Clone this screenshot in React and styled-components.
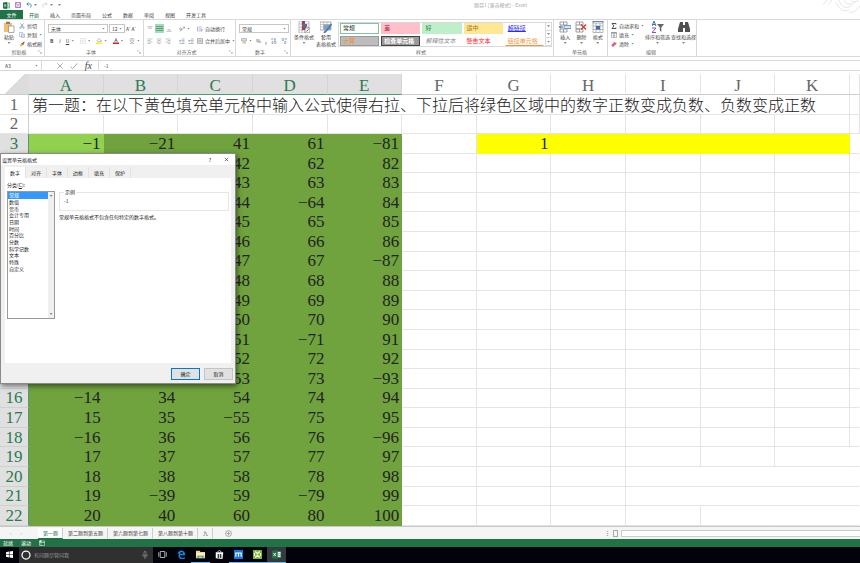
import React, { useState } from 'react';
import styled, { createGlobalStyle } from 'styled-components';

const COLORS = {
    excel: '#217346',
    line: '#d9d9d9',
    grid: '#e4e4e4',
    header: '#e0e0e0',
    cell: '#70a23e',
    active: '#92d050',
    yellow: '#ffff00',
    text: '#444'
};
const UI_FONT = '"Noto Sans CJK SC", "Noto Sans", sans-serif';
const CELL_FONT = '"Liberation Serif", "Noto Sans CJK SC", serif';

const GlobalStyle = createGlobalStyle`
    * {
        box-sizing: border-box;
    }
    body {
        margin: 0;
        background: #fff;
        color: ${COLORS.text};
        font-family: ${UI_FONT};
        font-size: 5px;
        line-height: 6px;
    }
    button, input, select {
        font: inherit;
        color: inherit;
        margin: 0;
        padding: 0;
        border: 0;
        background: none;
    }
`;

/* ---------- data ---------- */

const COLUMNS = ['A', 'B', 'C', 'D', 'E', 'F', 'G', 'H', 'I', 'J', 'K'];
const NEGATIVE = [1, 14, 16, 21, 39, 55, 64, 71, 79, 81, 87, 93, 96, 13];
const ROWS = Array.from({ length: 20 }, (_, i) => i + 3);
const valueAt = (row, col) => {
    const n = row - 2 + col * 20;
    return NEGATIVE.includes(n) ? `−${n}` : `${n}`;
};
const TITLE =
    '第一题：在以下黄色填充单元格中输入公式使得右拉、下拉后将绿色区域中的数字正数变成负数、负数变成正数';

const MENU = ['插入', '页面布局', '公式', '数据', '审阅', '视图', '开发工具'];
const STYLES = [
    { name: '常规', color: '#333', border: '#7fc4a0' },
    { name: '差', bg: '#ffc0ca', color: '#b0203a' },
    { name: '好', bg: '#bdf0c8', color: '#1e7a32' },
    { name: '适中', bg: '#ffe793', color: '#a8741a' },
    { name: '超链接', color: '#2a2af0', underline: true },
    { name: '计算', bg: '#bdbdbd', color: '#f08a1c', border: '#999' },
    { name: '检查单元格', bg: '#9a9a9a', color: '#fff', border: '#444', bold: true },
    { name: '解释性文本', color: '#888', italic: true },
    { name: '警告文本', color: '#ff2020' },
    { name: '链接单元格', color: '#f0953c', rule: true }
];
const CATEGORIES = [
    '常规', '数值', '货币', '会计专用', '日期', '时间',
    '百分比', '分数', '科学记数', '文本', '特殊', '自定义'
];
const DIALOG_TABS = ['数字', '对齐', '字体', '边框', '填充', '保护'];
const SHEETS = ['第一题', '第二题到第五题', '第六题到第七题', '第八题到第十题', '九'];

/* ---------- icons, all on a 12 x 12 box ---------- */

const ICONS = {
    excel: (
        <>
            <path d="M0 1l7-1v12l-7-1z" fill="#217346" />
            <path d="M7 2h5v8H7z" fill="#fff" stroke="#217346" />
            <path d="M2 4l3 4M5 4L2 8" stroke="#fff" strokeWidth="1.2" />
            <path d="M7 5h5M7 7.500h5" stroke="#217346" strokeWidth=".7" />
        </>
    ),
    save: (
        <>
            <path d="M1 1h10v10H1z" fill="none" stroke="#9a4fb0" strokeWidth="1.4" />
            <path d="M3 1h6v4H3zM3.500 7.500h5V11h-5z" fill="#fff" stroke="#9a4fb0" />
        </>
    ),
    undo: (
        <path d="M5 1L1.500 4 5 7M2 4h5c5 0 4 6 1 7" fill="none" stroke="#2f6fb5" strokeWidth="1.6" />
    ),
    redo: (
        <path d="M7 1l3.500 3L7 7M10 4H5C0 4 1 10 4 11" fill="none" stroke="#c8c8c8" strokeWidth="1.4" />
    ),
    paste: (
        <>
            <path d="M1 2h8v9H1z" fill="#f3bd6b" />
            <path d="M3 .8h4v2H3z" fill="#777" />
            <path d="M5.500 5H11v6.500H5.500z" fill="#fff" stroke="#888" strokeWidth=".7" />
        </>
    ),
    cut: (
        <>
            <path d="M3 1l5 7M9 1L4 8" stroke="#555" fill="none" />
            <circle cx="3" cy="9.500" r="1.500" fill="none" stroke="#3a78b8" />
            <circle cx="9" cy="9.500" r="1.500" fill="none" stroke="#3a78b8" />
        </>
    ),
    copy: (
        <>
            <path d="M1 1h6v8H1z" fill="#fff" stroke="#6f94bd" />
            <path d="M5 4h6v7H5z" fill="#fff" stroke="#6f94bd" />
            <path d="M6.500 6.500h3M6.500 8.500h3" stroke="#6f94bd" />
        </>
    ),
    brush: (
        <>
            <path d="M6 5l4-4 1.500 1.500L8 7z" fill="#555" />
            <path d="M5 4l4 4-4 3-4-1z" fill="#f0b860" />
            <path d="M5 4l4 4" stroke="#444" strokeWidth="1.500" />
        </>
    ),
    top: <path d="M1 1.500h10M3 4.500h6" stroke="#777" />,
    middle: <path d="M1 3.500h10M1 6h10M1 8.500h10" stroke="#4a8a63" />,
    bottom: <path d="M3 7.500h6M1 10.500h10" stroke="#777" />,
    left: <path d="M1 2h10M1 5h6M1 8h10M1 11h6" stroke="#888" />,
    center: <path d="M1 2h10M3 5h6M1 8h10M3 11h6" stroke="#888" />,
    right: <path d="M1 2h10M5 5h6M1 8h10M5 11h6" stroke="#888" />,
    orient: (
        <path d="M1 6c1-3 4-3 4 0s-3 3-4 0M2 11l9-9M8 2h3v3" fill="none" stroke="#666" />
    ),
    outdent: (
        <>
            <path d="M6 2h5M6 5h5M6 8h5M1 11h10" stroke="#777" />
            <path d="M5 5.500H1M3 3.500l-2 2 2 2" stroke="#2f6fb5" fill="none" />
        </>
    ),
    indent: (
        <>
            <path d="M6 2h5M6 5h5M6 8h5M1 11h10" stroke="#777" />
            <path d="M0 5.500h4.500M2.500 3.500l2 2-2 2" stroke="#2f6fb5" fill="none" />
        </>
    ),
    wrap: (
        <>
            <path d="M1 1v10M3 2h6M3 10h3" stroke="#777" />
            <path d="M3 6h7c2 0 1 4-2 4M9 8l-2 2 2 1.500" stroke="#5a5ac8" fill="none" />
        </>
    ),
    merge: (
        <>
            <path d="M1 1h10v10H1zM1 4h10M1 8h10" fill="none" stroke="#777" />
            <path d="M3 6h6" stroke="#3a78b8" />
        </>
    ),
    borders: <path d="M1 1h10v10H1zM6 1v10M1 6h10" fill="none" stroke="#aaa" strokeDasharray="1 1" />,
    bucket: (
        <>
            <path d="M2 5l4-4 4 4-4 3z" fill="#fff" stroke="#777" />
            <path d="M10 5l1 3" stroke="#3a78b8" />
            <path d="M0 9h12v3H0z" fill="#ffee00" />
        </>
    ),
    fontColor: (
        <>
            <path d="M3 8l3-7 3 7M4 5.500h4" fill="none" stroke="#555" strokeWidth="1.300" />
            <path d="M0 9h12v3H0z" fill="#e01b1b" />
        </>
    ),
    phonetic: <path d="M3 1h6M1 4h10M3 5c1 4 4 6 8 7M9 5c-1 4-4 6-8 7" fill="none" stroke="#777" />,
    currency: (
        <>
            <path d="M1 1h10v5H1z" fill="#cfe0ef" stroke="#6f94bd" />
            <path d="M3 8h6M4 10h6" stroke="#efae3c" strokeWidth="2" />
        </>
    ),
    moreDec: <path d="M5 2L1 2M3 0.500L1 2l2 1.500M7 1h2v4H7zM2 7h2v4H2zM7 7h3v4H7z" fill="none" stroke="#5e7fa8" />,
    lessDec: <path d="M7 2h4M9 .5L11 2 9 3.500M2 1h3v4H2zM7 7h3v4H7zM4 10v1" fill="none" stroke="#5e7fa8" />,
    conditional: (
        <>
            <path d="M1 0h10v12H1zM1 3h10M1 6h10M1 9h10M4 0v12" fill="#fff" stroke="#999" strokeWidth=".6" />
            <path d="M4 0h3v3H4zM4 6h4v3H4z" fill="#b03a4a" />
            <path d="M4 3h5v3H4z" fill="#4f6fa8" />
            <path d="M7 7h5v5H7z" fill="#fff" stroke="#666" strokeWidth=".7" />
            <path d="M8.500 10.500l2-2" stroke="#333" strokeWidth=".8" />
        </>
    ),
    tableFormat: (
        <>
            <path d="M0 1h11v8H0z" fill="#fff" stroke="#888" strokeWidth=".7" />
            <path d="M3.500 3.500H11V9H3.500z" fill="#7aa7d8" />
            <path d="M0 3.500h11M0 6h11M3.500 1v8M7 1v8" stroke="#999" strokeWidth=".5" />
            <path d="M11.500 3L7 9l-3 3" stroke="#4a78b0" strokeWidth="1.800" />
        </>
    ),
    insert: (
        <>
            <path d="M1 1h7v3H1zM1 8h7v3H1zM4.500 1v3M4.500 8v3" fill="none" stroke="#888" strokeWidth=".8" />
            <path d="M5 4.500h7v3H5z" fill="#d5e3f3" stroke="#5a87bd" strokeWidth=".8" />
            <path d="M0 6h4M2 4.500L.5 6 2 7.500" stroke="#3567a8" fill="none" />
        </>
    ),
    remove: (
        <>
            <path d="M1 1h7v3H1zM1 8h7v3H1zM4.500 1v3M4.500 8v3M1 4v4h4" fill="none" stroke="#888" strokeWidth=".8" />
            <path d="M6 3.500l5 5M11 3.500l-5 5" stroke="#d0402c" strokeWidth="1.500" />
        </>
    ),
    format: (
        <>
            <path d="M1 2h10v9.500H1zM4 2v9M8 2v9M1 5h10M1 8.500h10" fill="none" stroke="#999" strokeWidth=".7" />
            <path d="M4 5h4v3.500H4z" fill="#3a70b0" />
            <path d="M1 .5h10M1 0v2M11 0v2" stroke="#3a70b0" strokeWidth=".8" />
        </>
    ),
    sum: <path d="M10 3V1H2l4 5-4 5h8V9" fill="none" stroke="#333" strokeWidth="1.700" />,
    fill: (
        <>
            <path d="M1 1h10v10H1z" fill="#fff" stroke="#777" />
            <path d="M1 2h10" stroke="#777" strokeWidth="2" />
            <path d="M6 4v5M4 7l2 2 2-2" fill="none" stroke="#2f6fb5" strokeWidth="1.300" />
        </>
    ),
    eraser: <path d="M1 8l6-6 4 3-6 6H3z" fill="#e8637a" stroke="#c03a4a" strokeWidth=".6" />,
    sort: (
        <>
            <path d="M0 5l2-5 2 5M.8 3.500h2.500" fill="none" stroke="#3a70b0" />
            <path d="M0 7h4l-4 4.500h4" fill="none" stroke="#8a4fb0" />
            <path d="M5 3h7L9.300 6.500V11L7.800 9.500v-3z" fill="#666" />
        </>
    ),
    find: <path d="M2 1h3v3h2V1h3l2 7v3H7V7H5v4H0V8z" fill="#505050" />,
    launcher: <path d="M1 5V1h4M5 5l5 5M10 6v4H6" fill="none" stroke="#888" strokeWidth="1.300" />,
    cross: <path d="M2 2l8 8M10 2l-8 8" stroke="#999" strokeWidth="1.200" />,
    close: <path d="M2 2l8 8M10 2l-8 8" stroke="#333" strokeWidth="1.600" />,
    check: <path d="M1 7l3 3 7-8" fill="none" stroke="#999" strokeWidth="1.300" />,
    plus: (
        <>
            <circle cx="6" cy="6" r="5" fill="none" stroke="#777" />
            <path d="M6 3v6M3 6h6" stroke="#777" />
        </>
    ),
    macro: (
        <>
            <path d="M1 2h10v9H1zM1 5h10M4 5v6" fill="none" stroke="#fff" />
            <circle cx="3" cy="2.500" r="2" fill="#fff" />
        </>
    ),
    windows: <path d="M0 2l5-1v4.500H0zM6 .8L12 0v5.500H6zM0 6.500h5V11l-5-1zM6 6.500h6V12l-6-1z" fill="#fff" />,
    cortana: <circle cx="6" cy="6" r="4.800" fill="none" stroke="#fff" strokeWidth="1.500" />,
    mic: <path d="M4.500 1h3v6h-3zM2.500 5c0 5 7 5 7 0M6 9v3" fill="none" stroke="#999" />,
    taskView: <path d="M3 2h6v8H3zM1 3v6M11 3v6" fill="none" stroke="#ddd" />,
    edge: (
        <path d="M1 5C2-1 11-1 11 7H4c0 4 4 4 6.500 2.500v2C4 14 0 9 3 5c-1 0-1.500 0-2 1zM4.300 5H8c0-3-3.500-3-3.700 0z" fill="#1684e0" />
    ),
    folder: (
        <>
            <path d="M0 1h5l1 1.500h6V11H0z" fill="#f5d67b" />
            <path d="M0 4h12v3H0z" fill="#fdf0c0" />
            <path d="M2 11V7.500h8V11H8V9H4v2z" fill="#35a0dc" />
        </>
    ),
    store: (
        <>
            <path d="M1 3h10l-1 9-9-1z" fill="#fff" />
            <path d="M4 3c0-3 4-3 4 0" fill="none" stroke="#fff" />
            <path d="M3.500 5.500h2v2h-2zM6.500 5.500h2v2h-2zM3.500 8.300h2v2h-2zM6.500 8.300h2v2h-2z" fill="#000" />
        </>
    ),
    maxthon: (
        <>
            <path d="M0 0h12v12H0z" fill="#1778dd" />
            <path d="M2.500 9V4h7v5M6 4v5" fill="none" stroke="#fff" strokeWidth="1.500" />
        </>
    ),
    recorder: (
        <>
            <path d="M0 0h12v12H0z" fill="#76b82a" />
            <path d="M3 2l3 3 3-3M3 10l3-3 3 3M2 4v4M10 4v4" fill="none" stroke="#fff" strokeWidth="1.500" />
        </>
    )
};

const Icon = ({ name, size = 8 }) => (
    <svg width={size} height={size} viewBox="0 0 12 12" aria-hidden="true">
        {ICONS[name]}
    </svg>
);

const Caret = styled.i`
    flex: none;
    width: 3px;
    height: 2px;
    background: #888;
    clip-path: polygon(0 0, 100% 0, 50% 100%);
`;

/* ---------- window chrome ---------- */

const Root = styled.div`
    display: flex;
    flex-direction: column;
    height: 100vh;
    overflow: hidden;
`;

const TitleBar = styled.header`
    display: flex;
    align-items: center;
    flex: none;
    height: 10px;
    padding-left: 3px;
    position: relative;
`;

const QuickAccess = styled.div`
    display: flex;
    align-items: center;
    gap: 5px;
    width: 138px;
    button {
        display: flex;
        align-items: center;
        gap: 2px;
    }
`;

const WindowTitle = styled.div`
    flex: 1;
    text-align: center;
    color: #aaa;
`;

const Swirl = styled.svg`
    position: absolute;
    top: 0;
    right: 0;
`;

const MenuBar = styled.nav`
    display: flex;
    align-items: center;
    flex: none;
    gap: 11px;
    height: 9px;
`;

const MenuTab = styled.button`
    color: ${props => (props.$active ? COLORS.excel : COLORS.text)};
    white-space: nowrap;
`;

const FileTab = styled.button`
    width: 23px;
    height: 9px;
    margin-right: -5px;
    background: ${COLORS.excel};
    color: #fff;
`;

/* ---------- ribbon ---------- */

const RibbonBar = styled.section`
    display: flex;
    flex: none;
    height: 38px;
    border-top: 1px solid ${COLORS.line};
    border-bottom: 1px solid ${COLORS.line};
`;

const Group = styled.div`
    display: flex;
    flex-direction: column;
    flex: none;
    width: ${props => props.$width}px;
    border-right: 1px solid ${COLORS.line};
`;

const GroupBody = styled.div`
    display: flex;
    flex: 1;
    min-height: 0;
    gap: ${props => props.$gap || 0}px;
    padding: 1px 1px 0 3px;
`;

const GroupLabel = styled.div`
    display: flex;
    align-items: center;
    flex: none;
    height: 8px;
    padding-right: 2px;
    color: #666;
    span {
        flex: 1;
        text-align: center;
    }
`;

const BigButton = styled.button`
    display: flex;
    flex: ${props => (props.$grow ? 1 : 'none')};
    flex-direction: column;
    align-items: center;
    gap: 1px;
    white-space: nowrap;
    ${Caret} {
        margin-top: 1px;
    }
`;

const Stack = styled.div`
    display: flex;
    flex-direction: column;
    flex: ${props => (props.$grow ? 1 : 'none')};
`;

const ToolStack = styled(Stack)`
    gap: 3px;
    padding-top: 3px;
`;

const SmallButton = styled.button`
    display: flex;
    align-items: center;
    gap: 2px;
    height: 9px;
    white-space: nowrap;
    font-weight: ${props => (props.$bold ? 700 : 400)};
    font-style: ${props => (props.$italic ? 'italic' : 'normal')};
    text-decoration: ${props => (props.$underline ? 'underline' : 'none')};
    background: ${props => (props.$on ? '#a3dcb9' : 'none')};
`;

const ToolRow = styled.div`
    display: flex;
    align-items: center;
    justify-content: ${props => (props.$spread ? 'space-between' : 'flex-start')};
    gap: ${props => props.$gap || 0}px;
    height: 9px;
    padding: 0 ${props => (props.$spread ? 2 : 0)}px;
`;

const SelectBox = styled.label`
    display: flex;
    align-items: center;
    flex: ${props => (props.$width ? 'none' : 1)};
    width: ${props => (props.$width ? `${props.$width}px` : 'auto')};
    height: 9px;
    padding: 0 2px;
    border: 1px solid #c6c6c6;
    select {
        appearance: none;
        flex: 1;
        min-width: 0;
        height: 7px;
        line-height: 7px;
    }
`;

const Dropdown = ({ label, value, width }) => (
    <SelectBox $width={width}>
        <select aria-label={label} defaultValue={value}>
            <option>{value}</option>
        </select>
        <Caret />
    </SelectBox>
);

const Gallery = styled.div`
    display: flex;
    flex: 1;
    height: 25px;
    margin-top: 1px;
    border: 1px solid ${COLORS.line};
`;

const Swatches = styled.div`
    display: grid;
    flex: 1;
    grid-template-columns: repeat(5, 1fr);
    grid-template-rows: repeat(2, 1fr);
    gap: 2px;
    padding: 0 1px;
`;

const Swatch = styled.button`
    padding: 0 2px;
    text-align: left;
    font-size: 6px;
    line-height: 8px;
    white-space: nowrap;
    overflow: hidden;
    color: ${props => props.$look.color};
    background: ${props => props.$look.bg || 'none'};
    border: 1px solid ${props => props.$look.border || 'transparent'};
    border-bottom-color: ${props => (props.$look.rule ? '#f0953c' : props.$look.border || 'transparent')};
    font-weight: ${props => (props.$look.bold ? 700 : 400)};
    font-style: ${props => (props.$look.italic ? 'italic' : 'normal')};
    text-decoration: ${props => (props.$look.underline ? 'underline' : 'none')};
`;

const GalleryArrows = styled.div`
    display: flex;
    flex-direction: column;
    width: 6px;
    border-left: 1px solid ${COLORS.line};
    button {
        display: flex;
        flex: 1;
        align-items: center;
        justify-content: center;
        border-bottom: 1px solid ${COLORS.line};
    }
`;

const RibbonGroup = ({ label, width, gap, launcher, children }) => (
    <Group $width={width}>
        <GroupBody $gap={gap}>{children}</GroupBody>
        <GroupLabel>
            <span>{label}</span>
            {launcher && <Icon name="launcher" size={4} />}
        </GroupLabel>
    </Group>
);

const Big = ({ icon, lines, grow }) => (
    <BigButton $grow={grow}>
        <Icon name={icon} size={12} />
        {lines.map(line => (
            <span key={line}>{line}</span>
        ))}
        {lines.length === 1 && <Caret />}
    </BigButton>
);

const Small = ({ icon, text, caret, label, on }) => (
    <SmallButton aria-label={label} $on={on}>
        {icon && <Icon name={icon} size={on ? 9 : 6} />}
        {text}
        {caret && <Caret />}
    </SmallButton>
);

const Ribbon = () => (
    <RibbonBar>
        <RibbonGroup label="剪贴板" width={45} gap={4} launcher>
            <Big icon="paste" lines={['粘贴']} />
            <Stack>
                <Small icon="cut" text="剪切" />
                <Small icon="copy" text="复制" caret />
                <Small icon="brush" text="格式刷" />
            </Stack>
        </RibbonGroup>
        <RibbonGroup label="字体" width={99} launcher>
            <ToolStack $grow>
                <ToolRow $gap={1}>
                    <Dropdown label="字体" value="宋体" width={60} />
                    <Dropdown label="字号" value="12" width={16} />
                    <SmallButton>A˄</SmallButton>
                    <SmallButton>A˅</SmallButton>
                </ToolRow>
                <ToolRow $spread>
                    <SmallButton $bold>B</SmallButton>
                    <SmallButton $italic>I</SmallButton>
                    <SmallButton $underline>U<Caret /></SmallButton>
                    <Small icon="borders" label="边框" caret />
                    <Small icon="bucket" label="填充颜色" caret />
                    <Small icon="fontColor" label="字体颜色" caret />
                    <Small icon="phonetic" label="拼音" caret />
                </ToolRow>
            </ToolStack>
        </RibbonGroup>
        <RibbonGroup label="对齐方式" width={92} gap={7} launcher>
            <ToolStack>
                <ToolRow $gap={2}>
                    <Small icon="top" label="顶端对齐" />
                    <Small icon="middle" label="垂直居中" on />
                    <Small icon="bottom" label="底端对齐" />
                </ToolRow>
                <ToolRow $gap={3}>
                    <Small icon="left" label="左对齐" />
                    <Small icon="center" label="居中" />
                    <Small icon="right" label="右对齐" />
                </ToolRow>
            </ToolStack>
            <ToolStack $grow>
                <ToolRow $gap={7}>
                    <Small icon="orient" label="方向" caret />
                    <Small icon="wrap" text="自动换行" />
                </ToolRow>
                <ToolRow $gap={3}>
                    <Small icon="outdent" label="减少缩进量" />
                    <Small icon="indent" label="增加缩进量" />
                    <Small icon="merge" text="合并后居中" caret />
                </ToolRow>
            </ToolStack>
        </RibbonGroup>
        <RibbonGroup label="数字" width={55} launcher>
            <ToolStack $grow>
                <ToolRow>
                    <Dropdown label="数字格式" value="常规" />
                </ToolRow>
                <ToolRow $spread>
                    <Small icon="currency" label="会计数字格式" caret />
                    <SmallButton>%</SmallButton>
                    <SmallButton $bold>,</SmallButton>
                    <Small icon="moreDec" label="增加小数位数" />
                    <Small icon="lessDec" label="减少小数位数" />
                </ToolRow>
            </ToolStack>
        </RibbonGroup>
        <RibbonGroup label="样式" width={263} gap={2}>
            <Big icon="conditional" lines={['条件格式']} />
            <Big icon="tableFormat" lines={['套用', '表格格式']} />
            <Gallery>
                <Swatches>
                    {STYLES.map(look => (
                        <Swatch key={look.name} $look={look}>
                            {look.name}
                        </Swatch>
                    ))}
                </Swatches>
                <GalleryArrows>
                    <button aria-label="上一行"><Caret /></button>
                    <button aria-label="下一行"><Caret /></button>
                    <button aria-label="其他"><Caret /></button>
                </GalleryArrows>
            </Gallery>
        </RibbonGroup>
        <RibbonGroup label="单元格" width={54}>
            <Big icon="insert" lines={['插入']} grow />
            <Big icon="remove" lines={['删除']} grow />
            <Big icon="format" lines={['格式']} grow />
        </RibbonGroup>
        <RibbonGroup label="编辑" width={89} gap={1}>
            <Stack $grow>
                <Small icon="sum" text="自动求和" caret />
                <Small icon="fill" text="填充" caret />
                <Small icon="eraser" text="清除" caret />
            </Stack>
            <Big icon="sort" lines={['排序和筛选']} />
            <Big icon="find" lines={['查找和选择']} />
        </RibbonGroup>
    </RibbonBar>
);

/* ---------- formula bar ---------- */

const FormulaRow = styled.div`
    display: flex;
    align-items: stretch;
    flex: none;
    height: 11px;
    margin: 3px 0;
    border-top: 1px solid ${COLORS.line};
    border-bottom: 1px solid ${COLORS.line};
`;

const NameBox = styled.label`
    display: flex;
    align-items: center;
    width: 42px;
    padding: 0 3px 0 5px;
    border-right: 1px solid ${COLORS.line};
    input {
        flex: 1;
        min-width: 0;
    }
`;

const FormulaTools = styled.div`
    display: flex;
    align-items: center;
    justify-content: space-between;
    width: 57px;
    padding: 0 6px 0 14px;
    border-right: 1px solid ${COLORS.line};
    button {
        display: flex;
        align-items: center;
    }
`;

const Fx = styled.button`
    font: italic 10px/9px ${CELL_FONT};
`;

const FormulaInput = styled.input`
    flex: 1;
    padding-left: 5px;
`;

/* ---------- sheet ---------- */

const SheetArea = styled.main`
    flex: 1;
    min-height: 0;
`;

const Table = styled.table`
    width: 100%;
    height: 100%;
    table-layout: fixed;
    border-collapse: separate;
    border-spacing: 0;
    font-family: ${CELL_FONT};
    font-size: 17px;
    line-height: 17px;
    color: #222;
`;

const Column = styled.col`
    width: ${props => (props.$width ? `${props.$width}px` : 'auto')};
`;

const ColumnHead = styled.th`
    height: 21px;
    padding: 2px 0 0;
    font-weight: 400;
    color: ${props => (props.$on ? '#2b7a53' : '#666')};
    background: ${props => (props.$on ? COLORS.header : '#fff')};
    border-right: 1px solid ${props => (props.$on ? '#d4d4d4' : COLORS.grid)};
    border-bottom: 1px solid ${props => (props.$on ? '#4f9a73' : '#ccc')};
`;

const Corner = styled.th`
    padding: 0;
    background: linear-gradient(135deg, #fff 50%, #dcdcdc 50%);
    border-bottom: 1px solid #ccc;
`;

const RowHead = styled.th`
    padding: 0;
    font-weight: 400;
    color: ${props => (props.$on ? '#2b7a53' : '#666')};
    background: ${props => (props.$on ? COLORS.header : '#fff')};
    border-right: 1px solid ${props => (props.$on ? '#4f9a73' : '#ccc')};
    border-bottom: 1px solid ${props => (props.$on ? '#d0d0d0' : COLORS.grid)};
`;

const cellColor = { green: COLORS.cell, active: COLORS.active, yellow: COLORS.yellow };

const Cell = styled.td`
    padding: 0 2px 0 0;
    text-align: right;
    white-space: nowrap;
    background: ${props => cellColor[props.$fill] || '#fff'};
    border-right: 1px solid
        ${props => cellColor[props.$fill] || (props.$open ? 'transparent' : COLORS.grid)};
    border-bottom: 1px solid ${props => cellColor[props.$fill] || COLORS.grid};
`;

const TitleCell = styled(Cell)`
    padding: 0 0 0 3px;
    text-align: left;
    font-family: ${UI_FONT};
    font-size: 16px;
    font-weight: 300;
`;

const fillFor = (row, col) => {
    if (col < 5) return row === 3 && col === 0 ? 'active' : 'green';
    if (row === 3 && col > 5) return 'yellow';
    return undefined;
};

const textFor = (row, col) => {
    if (col < 5) return valueAt(row, col);
    return row === 3 && col === 6 ? '1' : '';
};

const isOpen = (row, col) =>
    (row >= 20 && col === 9) || ((row === 20 || row === 21) && col === 8) || (row > 18 && col === 10);

const Sheet = () => (
    <SheetArea>
        <Table>
            <colgroup>
                <Column $width={29} />
                {COLUMNS.map(c => (
                    <Column key={c} />
                ))}
                <Column $width={10} />
            </colgroup>
            <thead>
                <tr>
                    <Corner />
                    {COLUMNS.map((c, i) => (
                        <ColumnHead key={c} $on={i < 5}>{c}</ColumnHead>
                    ))}
                    <ColumnHead />
                </tr>
            </thead>
            <tbody>
                <tr>
                    <RowHead>1</RowHead>
                    <TitleCell colSpan={11}>{TITLE}</TitleCell>
                    <Cell />
                </tr>
                <tr>
                    <RowHead>2</RowHead>
                    {COLUMNS.map(c => (
                        <Cell key={c} />
                    ))}
                    <Cell />
                </tr>
                {ROWS.map(row => (
                    <tr key={row}>
                        <RowHead $on>{row}</RowHead>
                        {COLUMNS.map((c, col) => (
                            <Cell key={c} $fill={fillFor(row, col)} $open={isOpen(row, col)}>
                                {textFor(row, col)}
                            </Cell>
                        ))}
                        <Cell $open />
                    </tr>
                ))}
            </tbody>
        </Table>
    </SheetArea>
);

/* ---------- format cells dialog ---------- */

const DialogBox = styled.div`
    position: absolute;
    left: 0;
    top: 153px;
    display: flex;
    flex-direction: column;
    width: 236px;
    height: 231px;
    padding: 0 4px;
    background: #f0f0f0;
    border: 1px solid #8a8a8a;
    box-shadow: 1px 2px 5px rgba(0, 0, 0, 0.5);
    color: #222;
`;

const DialogTitle = styled.div`
    display: flex;
    align-items: center;
    gap: 13px;
    height: 11px;
    margin: 0 -4px;
    padding: 0 6px 0 1px;
    background: #fff;
    h2 {
        flex: 1;
        margin: 0;
        font: inherit;
    }
    button {
        display: flex;
    }
`;

const DialogTabs = styled.div`
    display: flex;
    margin-top: 2px;
`;

const DialogTab = styled.button`
    width: 21px;
    height: 11px;
    background: ${props => (props.$active ? '#fff' : '#f0f0f0')};
    border-right: 1px solid #e2e2e2;
`;

const DialogPanel = styled.div`
    flex: 1;
    display: flex;
    gap: 4px;
    padding: 4px 2px;
    background: #fff;
`;

const CategoryList = styled.div`
    display: flex;
    width: 48px;
    height: 128px;
    margin-top: 3px;
    border: 1px solid #999;
    ul {
        display: grid;
        grid-template-rows: repeat(12, 1fr);
        flex: 1;
        height: 80px;
        margin: 0;
        padding: 0;
        list-style: none;
    }
`;

const Category = styled.li`
    display: flex;
    align-items: center;
    padding-left: 1px;
    color: ${props => (props.$selected ? '#fff' : '#222')};
    background: ${props => (props.$selected ? '#3399ff' : 'none')};
    cursor: default;
`;

const ListScroll = styled.div`
    display: flex;
    flex-direction: column;
    align-items: center;
    justify-content: space-between;
    width: 6px;
    padding: 3px 0;
    background: #f0f0f0;
`;

const Sample = styled.fieldset`
    height: 22px;
    margin: 7px 0 3px;
    padding: 3px 4px;
    border: 1px solid #e6e6e6;
    legend {
        padding: 0 1px;
    }
`;

const DialogFooter = styled.div`
    display: flex;
    justify-content: flex-end;
    gap: 4px;
    padding: 5px 0 3px;
    margin-right: -2px;
`;

const DialogButton = styled.button`
    width: 29px;
    height: 12px;
    background: #e1e1e1;
    border: 1px solid ${props => (props.$primary ? '#0078d7' : '#c4c4c4')};
`;

const FormatDialog = () => {
    const [selected, setSelected] = useState('常规');
    const [open, setOpen] = useState(true);
    if (!open) return null;
    return (
        <DialogBox role="dialog" aria-labelledby="format-title">
            <DialogTitle>
                <h2 id="format-title">设置单元格格式</h2>
                <button>?</button>
                <button aria-label="关闭" onClick={() => setOpen(false)}>
                    <Icon name="close" size={5} />
                </button>
            </DialogTitle>
            <DialogTabs role="tablist">
                {DIALOG_TABS.map((tab, i) => (
                    <DialogTab key={tab} role="tab" $active={i === 0}>{tab}</DialogTab>
                ))}
            </DialogTabs>
            <DialogPanel>
                <div>
                    <span id="category-label">分类(<u>C</u>):</span>
                    <CategoryList>
                        <ul role="listbox" aria-labelledby="category-label">
                            {CATEGORIES.map(name => (
                                <Category
                                    key={name}
                                    role="option"
                                    aria-selected={name === selected}
                                    $selected={name === selected}
                                    onClick={() => setSelected(name)}
                                >
                                    {name}
                                </Category>
                            ))}
                        </ul>
                        <ListScroll>
                            <Caret />
                            <Caret />
                        </ListScroll>
                    </CategoryList>
                </div>
                <Stack $grow>
                    <Sample>
                        <legend>示例</legend>
                        -1
                    </Sample>
                    <span>常规单元格格式不包含任何特定的数字格式。</span>
                </Stack>
            </DialogPanel>
            <DialogFooter>
                <DialogButton $primary onClick={() => setOpen(false)}>确定</DialogButton>
                <DialogButton onClick={() => setOpen(false)}>取消</DialogButton>
            </DialogFooter>
        </DialogBox>
    );
};

/* ---------- bottom bars ---------- */

const SheetTabs = styled.nav`
    display: flex;
    align-items: center;
    flex: none;
    height: 13px;
    padding-left: 10px;
    background: #f5f5f5;
    border-top: 1px solid #c8c8c8;
`;

const SheetArrows = styled.div`
    display: flex;
    gap: 9px;
    width: 28px;
    color: #aaa;
`;

const SheetTab = styled.button`
    height: 11px;
    padding: 0 4px 0 5px;
    white-space: nowrap;
    color: ${props => (props.$active ? COLORS.excel : COLORS.text)};
    background: ${props => (props.$active ? '#fff' : 'none')};
    border-right: 1px solid #ccc;
    border-bottom: 1px solid ${props => (props.$active ? COLORS.excel : 'transparent')};
`;

const AddSheet = styled.button`
    display: flex;
    flex: 1;
    padding-left: 12px;
`;

const ScrollTrack = styled.div`
    display: flex;
    align-items: center;
    width: 30%;
    height: 7px;
    gap: 3px;
    i {
        width: 5px;
        height: 7px;
        border: 1px solid #aaa;
    }
    span {
        flex: 1;
        height: 7px;
        background: #fff;
        border: 1px solid #ccc;
        border-right: 0;
    }
`;

const StatusBar = styled.footer`
    display: flex;
    align-items: center;
    gap: 8px;
    flex: none;
    height: 8px;
    padding-left: 3px;
    color: #fff;
    background: ${COLORS.excel};
`;

const Taskbar = styled.div`
    display: flex;
    align-items: center;
    flex: none;
    height: 16px;
    background: #02030a;
`;

const TaskButton = styled.button`
    display: flex;
    align-items: center;
    justify-content: center;
    width: 19px;
    height: 16px;
    background: ${props => (props.$active ? '#343a3d' : 'none')};
    border-bottom: 1px solid ${props => (props.$running ? '#76b9ed' : 'transparent')};
`;

const Search = styled.label`
    display: flex;
    align-items: center;
    gap: 3px;
    width: 134px;
    height: 16px;
    padding: 0 4px 0 2px;
    background: #303030;
    color: #999;
    input {
        flex: 1;
        min-width: 0;
    }
    input::placeholder {
        color: #999;
    }
`;

const App = () => (
    <Root>
        <GlobalStyle />
        <TitleBar>
            <QuickAccess>
                <button aria-label="Excel"><Icon name="excel" size={7} /></button>
                <button aria-label="保存"><Icon name="save" size={6} /></button>
                <button aria-label="撤消"><Icon name="undo" size={6} /><Caret /></button>
                <button aria-label="恢复"><Icon name="redo" size={6} /><Caret /></button>
                <button aria-label="自定义"><Caret /></button>
            </QuickAccess>
            <WindowTitle>题目1 [兼容模式] - Excel</WindowTitle>
            <Swirl width="38" height="14" viewBox="0 0 38 14" aria-hidden="true">
                <path
                    d="M1 5l4-5M6 5l4-5M14 2c3 8 8 10 13 8M17 0c2 7 8 10 13 5M22 0c2 5 7 6 12 1M27 12c5 1 8-2 11-6M29 0c2 3 5 2 8 0"
                    fill="none"
                    stroke="#e6e6e6"
                />
            </Swirl>
        </TitleBar>
        <MenuBar>
            <FileTab>文件</FileTab>
            <MenuTab $active>开始</MenuTab>
            {MENU.map(item => (
                <MenuTab key={item}>{item}</MenuTab>
            ))}
        </MenuBar>
        <Ribbon />
        <FormulaRow>
            <NameBox>
                <input aria-label="名称框" defaultValue="A3" />
                <Caret />
            </NameBox>
            <FormulaTools>
                <button aria-label="取消"><Icon name="cross" /></button>
                <button aria-label="输入"><Icon name="check" /></button>
                <Fx>fx</Fx>
            </FormulaTools>
            <FormulaInput aria-label="编辑栏" defaultValue="-1" />
        </FormulaRow>
        <Sheet />
        <SheetTabs>
            <SheetArrows>
                <span>‹</span>
                <span>›</span>
            </SheetArrows>
            {SHEETS.map((name, i) => (
                <SheetTab key={name} $active={i === 0}>{name}</SheetTab>
            ))}
            <AddSheet aria-label="新工作表"><Icon name="plus" size={7} /></AddSheet>
            <ScrollTrack>
                ⋮<i />
                <span />
            </ScrollTrack>
        </SheetTabs>
        <StatusBar>
            <span>就绪</span>
            <span>滚动</span>
            <Icon name="macro" size={6} />
        </StatusBar>
        <Taskbar>
            <TaskButton aria-label="开始"><Icon name="windows" size={7} /></TaskButton>
            <Search>
                <Icon name="cortana" size={10} />
                <input aria-label="搜索" placeholder="有问题尽管问我" />
                <Icon name="mic" />
            </Search>
            <TaskButton aria-label="任务视图"><Icon name="taskView" size={9} /></TaskButton>
            <TaskButton aria-label="Edge"><Icon name="edge" size={9} /></TaskButton>
            <TaskButton aria-label="文件资源管理器" $running><Icon name="folder" size={9} /></TaskButton>
            <TaskButton aria-label="应用商店"><Icon name="store" size={9} /></TaskButton>
            <TaskButton aria-label="浏览器" $running><Icon name="maxthon" size={9} /></TaskButton>
            <TaskButton aria-label="录屏" $running><Icon name="recorder" size={9} /></TaskButton>
            <TaskButton aria-label="Excel" $active $running><Icon name="excel" size={9} /></TaskButton>
        </Taskbar>
        <FormatDialog />
    </Root>
);

export default App;
